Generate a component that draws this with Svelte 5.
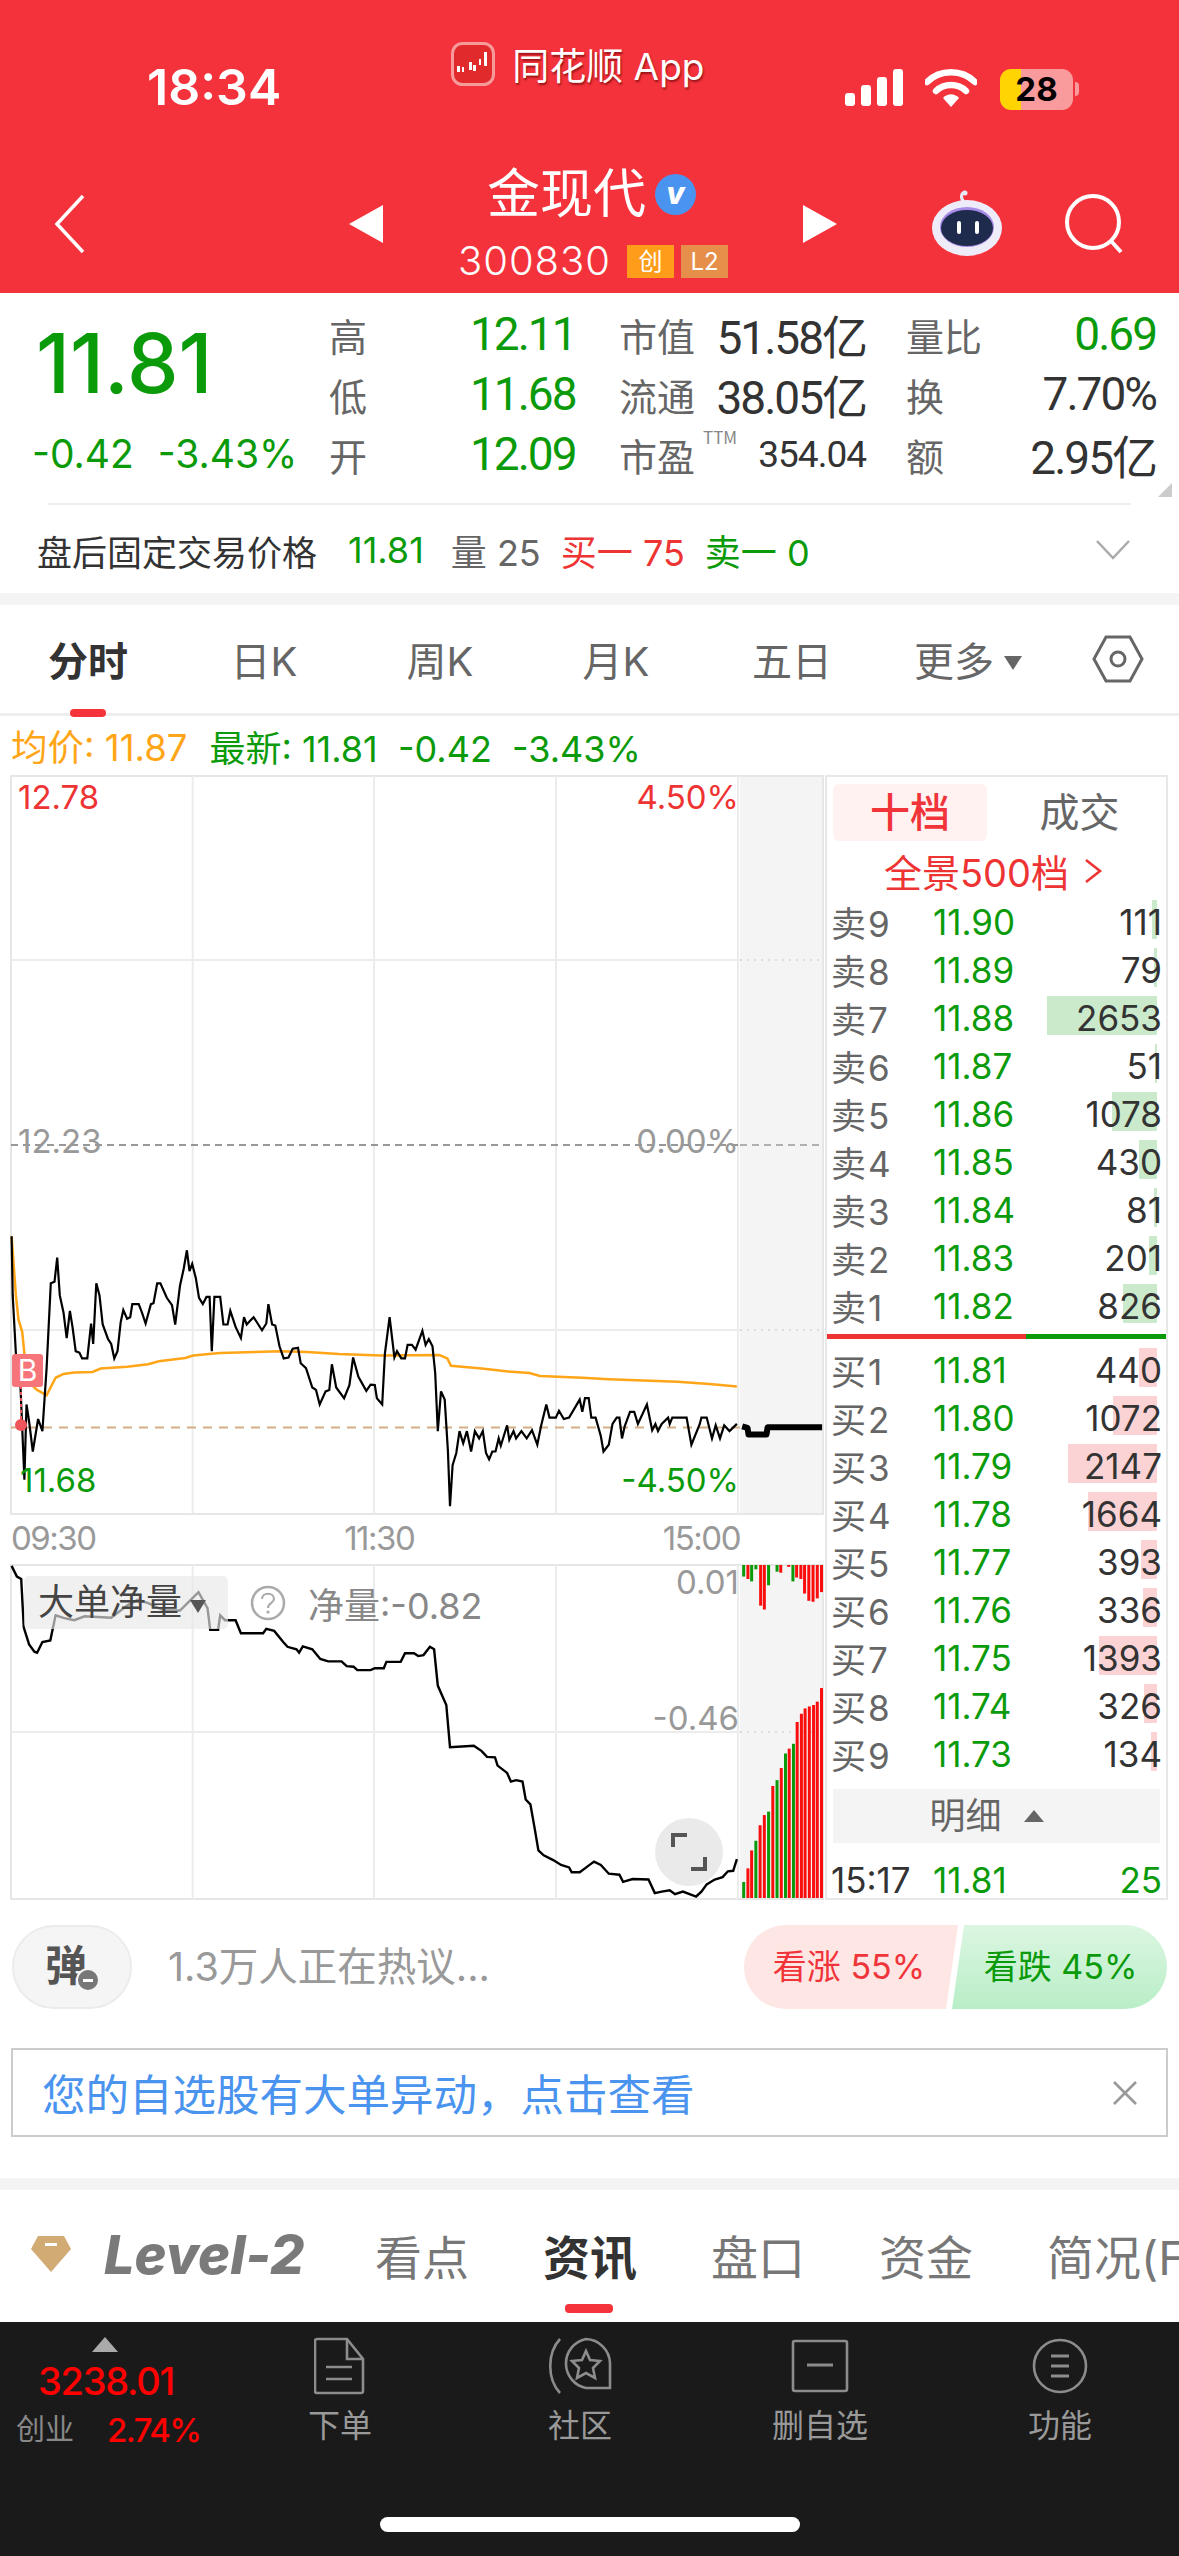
<script>
	// points are read off the chart at zoomed scale, sx/sy bring them back to page px
	const sx = 1.889, sy = 2.063;
	const top = 375;
	function line(flat) {
		let out = [];
		for (let i = 0; i < flat.length; i += 2) {
			out.push((flat[i] / sx).toFixed(1) + ',' + (top + flat[i + 1] / sy).toFixed(1));
		}
		return out.join(' ');
	}

	const price = line([22,178,24,300,30,420,38,470,46,680,50,525,55,560,62,622,72,555,80,580,88,450,96,275,103,272,108,222,113,300,120,335,126,388,132,332,137,365,143,415,150,418,155,430,165,430,172,358,176,400,182,275,188,300,194,360,204,390,210,400,216,430,222,415,228,355,233,330,240,348,246,345,250,318,262,318,268,335,275,358,285,318,290,316,297,275,303,275,315,305,325,320,331,360,340,280,347,245,353,207,358,250,363,235,370,265,376,305,383,318,390,303,396,303,400,415,405,303,416,303,422,360,430,360,435,332,445,365,455,388,461,345,466,360,473,352,479,345,488,360,495,372,503,358,507,318,514,360,520,362,528,405,536,430,545,428,553,410,563,408,568,440,578,450,590,490,597,495,604,525,615,498,622,495,627,442,635,490,650,512,660,485,667,428,677,468,692,497,700,484,708,485,712,512,722,525,727,420,736,345,745,428,750,415,758,430,765,430,770,402,778,402,785,412,798,373,804,402,810,390,817,405,822,460,827,580,833,498,840,515,846,620,850,735,855,650,862,625,868,580,875,605,882,580,890,622,897,580,905,595,912,580,918,625,924,638,930,622,936,622,942,595,946,610,958,568,962,598,970,580,975,595,985,580,995,595,1005,578,1015,608,1022,570,1032,525,1038,552,1050,552,1056,538,1065,555,1075,552,1095,515,1100,540,1105,512,1112,512,1117,552,1125,552,1135,590,1140,622,1150,608,1157,565,1165,552,1170,552,1175,595,1180,570,1190,540,1198,540,1205,565,1222,525,1232,578,1238,565,1243,580,1250,565,1262,552,1265,565,1270,552,1297,552,1306,608,1322,565,1325,552,1335,552,1345,595,1352,568,1360,595,1368,568,1378,580,1392,565]);
	const after = line([1402,570,1412,573,1414,587,1448,587,1450,572,1553,572]);
	const avg = line([22,178,30,300,35,350,42,375,48,440,55,480,70,495,88,506,105,470,120,462,140,459,175,458,190,451,240,447,280,442,300,436,350,429,365,424,415,419,530,415,580,417,640,421,720,424,830,423,845,430,852,445,910,451,960,457,1000,460,1020,466,1100,470,1150,473,1280,478,1340,483,1392,488]);
	const net = line([22,858,32,880,40,885,45,985,55,1020,65,1035,70,1037,80,1015,95,1012,105,960,120,965,140,970,160,962,210,965,240,940,260,928,280,935,310,950,340,950,375,912,392,945,397,990,412,990,416,960,425,970,445,970,455,997,497,997,503,988,518,992,535,1015,543,1025,560,1030,565,1037,572,1024,590,1030,605,1050,620,1055,645,1055,655,1065,668,1066,675,1073,700,1073,708,1069,725,1069,730,1056,757,1056,765,1038,782,1038,790,1044,800,1042,812,1025,820,1030,827,1105,835,1125,843,1145,850,1232,895,1229,910,1240,920,1252,935,1253,940,1270,958,1285,965,1303,975,1300,987,1303,993,1340,1002,1350,1010,1400,1017,1445,1027,1455,1045,1465,1060,1475,1075,1480,1080,1490,1095,1490,1110,1478,1122,1468,1135,1475,1150,1493,1170,1495,1177,1510,1195,1504,1225,1505,1237,1533,1250,1530,1265,1527,1275,1535,1290,1530,1315,1540,1325,1530,1335,1515,1350,1505,1365,1500,1375,1488,1385,1487,1392,1463]);

	// after hours bars: [x, y end, colour]
	const barsTop = [[1402,880,'g'],[1410,885,'r'],[1417,890,'g'],[1425,865,'g'],[1434,940,'r'],[1441,948,'r'],[1449,898,'g'],[1465,870,'g'],[1472,872,'r'],[1487,860,'r'],[1495,890,'g'],[1502,882,'r'],[1510,885,'r'],[1517,915,'r'],[1525,930,'r'],[1533,932,'r'],[1541,925,'r'],[1549,912,'r']];
	const barsBottom = [[1402,1510,'g'],[1410,1482,'r'],[1417,1445,'r'],[1425,1425,'g'],[1433,1393,'r'],[1441,1372,'r'],[1449,1365,'g'],[1457,1312,'r'],[1465,1300,'g'],[1473,1275,'r'],[1481,1245,'g'],[1488,1235,'r'],[1496,1225,'g'],[1503,1180,'r'],[1511,1163,'r'],[1518,1152,'r'],[1526,1148,'r'],[1534,1145,'r'],[1541,1138,'r'],[1549,1110,'r']];
	const colorOf = (c) => (c == 'g' ? '#0a9a0a' : '#fa0d0d');

	const quote = [
		['高', '12.11', '市值', '51.58亿', '量比', '0.69', true],
		['低', '11.68', '流通', '38.05亿', '换', '7.70%', false],
		['开', '12.09', '市盈', '354.04', '额', '2.95亿', false],
	];
	const sells = [[9,'11.90',111],[8,'11.89',79],[7,'11.88',2653],[6,'11.87',51],[5,'11.86',1078],[4,'11.85',430],[3,'11.84',81],[2,'11.83',201],[1,'11.82',826]];
	const buys = [[1,'11.81',440],[2,'11.80',1072],[3,'11.79',2147],[4,'11.78',1664],[5,'11.77',393],[6,'11.76',336],[7,'11.75',1393],[8,'11.74',326],[9,'11.73',134]];
	const tabs = ['日K', '周K', '月K', '五日'];
	const gridX = [192.7, 374, 556, 738];
</script>

<div class="page">
	<header>
		<div class="status">
			<span class="time">18:34</span>
			<div class="app">
				<svg width="44" height="44" viewBox="0 0 44 44">
					<rect x="1.5" y="1.5" width="41" height="41" rx="10" fill="#e12a2c" stroke="#f79a9a" stroke-width="3"/>
					<path d="M6 24h3v6H6zM11 25h2v5h-2zM18 20h3v8h-3zM22 23h3v6h-3zM28 17h2v6h-2zM33 10h3v14h-3z" fill="#fff"/>
				</svg>
				<span>同花顺 App</span>
			</div>
			<div class="sys">
				<svg width="58" height="37" viewBox="0 0 58 37">
					<rect x="0" y="24" width="10" height="13" rx="3" fill="#fff"/>
					<rect x="16" y="16" width="10" height="21" rx="3" fill="#fff"/>
					<rect x="32" y="8" width="10" height="29" rx="3" fill="#fff"/>
					<rect x="48" y="0" width="10" height="37" rx="3" fill="#fff"/>
				</svg>
				<svg width="52" height="38" viewBox="0 0 52 38">
					<path d="M2 13C15 0 37 0 50 13" fill="none" stroke="#fff" stroke-width="6.5" stroke-linecap="round"/>
					<path d="M11 22C19 14 33 14 41 22" fill="none" stroke="#fff" stroke-width="6.5" stroke-linecap="round"/>
					<path d="M18 29C23 24 29 24 34 29L26 38z" fill="#fff"/>
				</svg>
				<div class="batt"><span>28</span></div>
				<i class="nub"></i>
			</div>
		</div>
		<div class="nav">
			<svg class="back" width="32" height="60" viewBox="0 0 32 60"><path d="M29 2L3 30l26 28" fill="none" stroke="#fff" stroke-width="3.5"/></svg>
			<i class="tri-l"></i>
			<div class="stock">
				<div class="name">金现代<span class="vmark">v</span></div>
				<div class="code">300830<b class="tag chuang">创</b><b class="tag l2">L2</b></div>
			</div>
			<i class="tri-r"></i>
			<svg class="robot" width="72" height="68" viewBox="0 0 72 68">
				<path d="M33 12C29 8 30 3 34 2" fill="none" stroke="#e8e8f5" stroke-width="3"/>
				<circle cx="34" cy="3" r="2.5" fill="#e8e8f5"/>
				<ellipse cx="36" cy="38" rx="35" ry="28" fill="#eeecf9"/>
				<ellipse cx="36" cy="37" rx="27" ry="20" fill="#a88be8"/>
				<ellipse cx="36" cy="38" rx="26" ry="18" fill="#1f2b4d"/>
				<rect x="26" y="31" width="4" height="13" rx="2" fill="#fff"/>
				<rect x="44" y="31" width="4" height="13" rx="2" fill="#fff"/>
			</svg>
			<svg class="search" width="62" height="62" viewBox="0 0 62 62">
				<circle cx="29" cy="29" r="26" fill="none" stroke="#fff" stroke-width="4"/>
				<path d="M47 48l10 11" stroke="#fff" stroke-width="4"/>
			</svg>
		</div>
	</header>

	<section class="quote">
		<div class="summary">
			<div class="last">
				<div class="big">11.81</div>
				<div class="chg"><span>-0.42</span><span>-3.43%</span></div>
			</div>
			<div class="cells">
				{#each quote as q, i}
					<span class="lb">{q[0]}</span>
					<span class="up first">{q[1]}</span>
					<span class="lb">{q[2]}{#if i == 2}<sup>TTM</sup>{/if}</span>
					<span class="val" class:small={i == 2}>{q[3]}</span>
					<span class="lb far">{q[4]}</span>
					<span class="val end" class:up={q[6]}>{q[5]}</span>
				{/each}
			</div>
			<i class="corner"></i>
		</div>
		<div class="rule"></div>
		<div class="fixed">
			<span class="fx-title">盘后固定交易价格</span>
			<span class="gr fx-num">11.81</span>
			<span class="fx-vol">量 25</span>
			<span class="rd">买一 75</span>
			<span class="gr">卖一 0</span>
			<svg width="34" height="20" viewBox="0 0 34 20"><path d="M1 1l16 17L33 1" fill="none" stroke="#aaa" stroke-width="2.5"/></svg>
		</div>
	</section>
	<div class="band"></div>

	<nav class="periods">
		<span class="period on">分时</span>
		{#each tabs as t}
			<span class="period">{t}</span>
		{/each}
		<span class="period">更多<i class="down"></i></span>
		<span class="period">
			<svg width="52" height="48" viewBox="0 0 52 48">
				<path d="M14 2h24l12 22-12 22H14L2 24z" fill="none" stroke="#666" stroke-width="3"/>
				<circle cx="26" cy="24" r="7" fill="none" stroke="#666" stroke-width="3"/>
			</svg>
		</span>
	</nav>
	<div class="legend">
		<span class="avg">均价: 11.87</span>
		<span class="gr">最新: 11.81&nbsp; -0.42&nbsp; -3.43%</span>
	</div>

	<div class="main">
		<div class="chart">
			<svg width="824" height="1125" viewBox="0 0 824 1125">
				<rect x="740" y="1" width="83" height="738" fill="#f4f4f4"/>
				<rect x="740" y="790" width="83" height="334" fill="#f4f4f4"/>
				<rect x="11" y="1" width="812" height="738" fill="none" stroke="#e6e6e6" stroke-width="2"/>
				<rect x="11" y="790" width="812" height="334" fill="none" stroke="#e6e6e6" stroke-width="2"/>
				{#each gridX as x}
					<line x1={x} x2={x} y1="1" y2="739" stroke="#ececec" stroke-width="2"/>
					<line x1={x} x2={x} y1="790" y2="1124" stroke="#ececec" stroke-width="2"/>
				{/each}
				<line x1="11" x2="740" y1="185" y2="185" stroke="#ececec" stroke-width="2"/>
				<line x1="11" x2="740" y1="555" y2="555" stroke="#ececec" stroke-width="2"/>
				<line x1="11" x2="740" y1="957" y2="957" stroke="#ececec" stroke-width="2"/>
				<line x1="11" x2="740" y1="370" y2="370" stroke="#777" stroke-width="1.5" stroke-dasharray="7 5"/>
				<line x1="740" x2="823" y1="185" y2="185" stroke="#ddd" stroke-width="2" stroke-dasharray="2 5"/>
				<line x1="740" x2="823" y1="370" y2="370" stroke="#999" stroke-width="1.5" stroke-dasharray="7 5"/>
				<line x1="740" x2="823" y1="555" y2="555" stroke="#ddd" stroke-width="2" stroke-dasharray="2 5"/>
				<line x1="740" x2="823" y1="957" y2="957" stroke="#ddd" stroke-width="2" stroke-dasharray="2 5"/>
				<line x1="11" x2="740" y1="652.5" y2="652.5" stroke="#d4ae86" stroke-width="2" stroke-dasharray="9 7"/>

				<polyline points={avg} fill="none" stroke="#ffa518" stroke-width="2.5"/>
				<polyline points={price} fill="none" stroke="#000" stroke-width="2.2"/>
				<polyline points={after} fill="none" stroke="#000" stroke-width="6" stroke-linejoin="round"/>
				<line x1="21" x2="21" y1="611" y2="650" stroke="#f0555b" stroke-width="2" stroke-dasharray="3 3"/>
				<circle cx="21" cy="650" r="6" fill="#f0555b"/>
				<polyline points={net} fill="none" stroke="#000" stroke-width="2.4"/>

				{#each barsTop as b}
					<rect x={b[0] / sx} y="790" width="3" height={top + b[1] / sy - 790} fill={colorOf(b[2])}/>
				{/each}
				{#each barsBottom as b}
					<rect x={b[0] / sx} y={top + b[1] / sy} width="3" height={1123 - top - b[1] / sy} fill={colorOf(b[2])}/>
				{/each}
			</svg>

			<span class="mark rd" style="left:18px;top:0px">12.78</span>
			<span class="mark rd right" style="top:0px">4.50%</span>
			<span class="mark muted" style="left:18px;top:344px">12.23</span>
			<span class="mark muted right" style="top:344px">0.00%</span>
			<span class="mark gr" style="left:20px;top:683px">11.68</span>
			<span class="mark gr right" style="top:683px">-4.50%</span>
			<span class="b-tag">B</span>
			<div class="axis">
				<span>09:30</span><span>11:30</span><span>15:00</span>
			</div>
			<span class="mark muted right" style="top:785px">0.01</span>
			<span class="mark muted right" style="top:921px">-0.46</span>
			<div class="net-head">
				<div class="net-sel">大单净量<i class="down dark"></i></div>
				<svg width="36" height="36" viewBox="0 0 36 36">
					<circle cx="18" cy="18" r="16" fill="none" stroke="#aaa" stroke-width="2.5"/>
					<path d="M12 14c0-7 12-7 12 0 0 4-6 4-6 9" fill="none" stroke="#aaa" stroke-width="2.2"/>
					<circle cx="18" cy="27" r="1.6" fill="#aaa"/>
				</svg>
				<span>净量:-0.82</span>
			</div>
			<div class="expand">
				<svg width="36" height="38" viewBox="0 0 36 38">
					<path d="M2 14V2h14M34 24v12H20" fill="none" stroke="#555" stroke-width="4"/>
				</svg>
			</div>
		</div>

		<aside class="book">
			<div class="book-tabs">
				<span class="book-on">十档</span>
				<span class="book-off">成交</span>
			</div>
			<div class="level500">全景500档
				<svg width="20" height="26" viewBox="0 0 20 26"><path d="M3 2l14 11L3 24" fill="none" stroke="#ee3333" stroke-width="2.6"/></svg>
			</div>
			{#each sells as r}
				<div class="row">
					<span class="r-lb">卖<em>{r[0]}</em></span>
					<span class="gr">{r[1]}</span>
					<span class="r-qty"><i class="fill sell" style="width:{r[2] * 0.0413}px"></i><b>{r[2]}</b></span>
				</div>
			{/each}
			<div class="split"><i></i><i></i></div>
			{#each buys as r}
				<div class="row">
					<span class="r-lb">买<em>{r[0]}</em></span>
					<span class="gr">{r[1]}</span>
					<span class="r-qty"><i class="fill buy" style="width:{r[2] * 0.0413}px"></i><b>{r[2]}</b></span>
				</div>
			{/each}
			<div class="detail">明细<i class="up-tri"></i></div>
			<div class="row tick">
				<span class="tick-t">15:17</span>
				<span class="gr">11.81</span>
				<span class="r-qty gr">25</span>
			</div>
		</aside>
	</div>

	<div class="danmu">
		<div class="dan-btn">弹<i class="minus"></i></div>
		<span class="hot">1.3万人正在热议...</span>
		<div class="vote">
			<span class="bull">看涨 55%</span>
			<span class="bear">看跌 45%</span>
		</div>
	</div>

	<div class="notice">
		<span>您的自选股有大单异动，点击查看</span>
		<svg width="26" height="26" viewBox="0 0 26 26"><path d="M2 2l22 22M24 2L2 24" stroke="#999" stroke-width="2.6"/></svg>
	</div>
	<div class="band low"></div>

	<nav class="news">
		<svg class="gem" width="42" height="38" viewBox="0 0 42 38">
			<path d="M8 1h26l7 13-20 23L1 14z" fill="#d2aa74"/>
			<rect x="15" y="8" width="12" height="3" fill="#fff"/>
		</svg>
		<span class="lv2">Level-2</span>
		<span class="nw n1">看点</span>
		<span class="nw on">资讯</span>
		<span class="nw">盘口</span>
		<span class="nw">资金</span>
		<span class="nw">简况(F10)</span>
	</nav>

	<footer>
		<div class="dock">
			<div class="index">
				<i class="idx-up"></i>
				<div class="idx-num">3238.01</div>
				<div class="idx-row"><span>创业</span><b>2.74%</b></div>
			</div>
			<div class="dock-item">
				<svg width="52" height="58" viewBox="0 0 52 58">
					<path d="M3 2h30l16 20v32a2 2 0 0 1-2 2H3a2 2 0 0 1-2-2V4a2 2 0 0 1 2-2z" fill="none" stroke="#8c8c8c" stroke-width="2.6"/>
					<path d="M33 2v20h16M12 30h26M12 42h26" fill="none" stroke="#8c8c8c" stroke-width="2.6"/>
				</svg>
				<span>下单</span>
			</div>
			<div class="dock-item">
				<svg width="64" height="58" viewBox="0 0 64 58">
					<path d="M12 2C-1 16-1 42 12 56" fill="none" stroke="#8c8c8c" stroke-width="2.6"/>
					<path d="M38 2a25 25 0 0 1 24 24v25H38a25 25 0 0 1 0-49z" fill="none" stroke="#8c8c8c" stroke-width="2.6"/>
					<path d="M38 14l4 9 10 1-7 7 2 10-9-5-9 5 2-10-7-7 10-1z" fill="none" stroke="#8c8c8c" stroke-width="2.6"/>
				</svg>
				<span>社区</span>
			</div>
			<div class="dock-item">
				<svg width="58" height="54" viewBox="0 0 58 54">
					<rect x="2" y="2" width="54" height="50" rx="2" fill="none" stroke="#8c8c8c" stroke-width="2.6"/>
					<path d="M16 26h26" stroke="#8c8c8c" stroke-width="3"/>
				</svg>
				<span>删自选</span>
			</div>
			<div class="dock-item">
				<svg width="56" height="56" viewBox="0 0 56 56">
					<circle cx="28" cy="28" r="26" fill="none" stroke="#8c8c8c" stroke-width="2.6"/>
					<path d="M19 18h18M19 28h18M19 38h18" stroke="#8c8c8c" stroke-width="3"/>
				</svg>
				<span>功能</span>
			</div>
		</div>
		<div class="home"></div>
	</footer>
</div>

<style>
	:global(body) {
		margin: 0;
		background: #fff;
	}
	.page {
		width: 1179px;
		height: 2556px;
		overflow: hidden;
		display: flex;
		flex-direction: column;
		font-family: Inter, "Noto Sans CJK SC", sans-serif;
		color: #333;
	}
	i, em {
		font-style: normal;
	}
	.gr { color: #0a9a0a; }
	.rd { color: #ee3333; }
	.up { color: #0a9a0a; }

	header {
		height: 293px;
		background: #f4323b;
		color: #fff;
		flex: none;
	}
	.status {
		height: 150px;
		display: flex;
		padding-left: 147px;
	}
	.time {
		font-size: 50px;
		font-weight: 600;
		line-height: 58px;
		margin-top: 58px;
	}
	.app {
		margin: 42px 0 0 170px;
		height: 44px;
		display: flex;
		align-items: center;
		gap: 17px;
		font-size: 37px;
		text-shadow: 1px 2px 2px rgba(90, 0, 0, 0.6);
	}
	.sys {
		margin: 69px 0 0 auto;
		padding-right: 106px;
		display: flex;
		gap: 22px;
		height: 40px;
		position: relative;
	}
	.batt {
		width: 73px;
		height: 41px;
		margin-left: 1px;
		border-radius: 11px;
		background: linear-gradient(90deg, #ffd400 21px, #f99a9c 21px);
		color: #000;
		font-size: 33px;
		font-weight: 700;
		line-height: 41px;
		text-align: center;
	}
	.nub {
		position: absolute;
		right: 100px;
		top: 13px;
		width: 4px;
		height: 14px;
		border-radius: 0 4px 4px 0;
		background: #f99a9c;
	}
	.nav {
		height: 143px;
		display: flex;
		align-items: center;
		padding-top: 4px;
		box-sizing: border-box;
	}
	.back { margin-left: 54px; }
	.tri-l, .tri-r {
		width: 0;
		height: 0;
		border-top: 19px solid transparent;
		border-bottom: 19px solid transparent;
	}
	.tri-l {
		margin-left: 263px;
		border-right: 34px solid #fff;
	}
	.tri-r {
		border-left: 34px solid #fff;
	}
	.stock {
		width: 420px;
		align-self: flex-start;
		display: flex;
		flex-direction: column;
		align-items: center;
		margin-top: 9px;
	}
	.name {
		font-size: 53px;
		line-height: 62px;
		display: flex;
		align-items: center;
		gap: 9px;
		margin-left: -3px;
	}
	.vmark {
		width: 41px;
		height: 41px;
		border-radius: 50%;
		background: #4a94ef;
		font-size: 30px;
		font-weight: 800;
		font-style: italic;
		line-height: 38px;
		text-align: center;
	}
	.code {
		font-size: 40px;
		font-weight: 300;
		letter-spacing: 1px;
		line-height: 36px;
		display: flex;
		align-items: center;
		margin-top: 18px;
	}
	.tag {
		width: 47px;
		height: 33px;
		font-size: 24px;
		font-weight: 400;
		letter-spacing: 0;
		line-height: 33px;
		text-align: center;
	}
	.chuang {
		background: #ff9d1a;
		margin-left: 16px;
	}
	.l2 {
		background: #e68f4a;
		margin-left: 7px;
	}
	.robot { margin-left: 94px; }
	.search { margin-left: 61px; }

	.quote {
		height: 300px;
		flex: none;
	}
	.summary {
		height: 210px;
		padding-top: 11px;
		box-sizing: border-box;
		display: flex;
		position: relative;
	}
	.last {
		width: 329px;
		padding-left: 32px;
		box-sizing: border-box;
		flex: none;
	}
	.big {
		font-size: 82px;
		font-weight: 500;
		line-height: 84px;
		color: #0a9a0a;
		margin-top: 18px;
		margin-left: 4px;
	}
	.chg {
		display: flex;
		gap: 24px;
		font-size: 39px;
		line-height: 40px;
		color: #0a9a0a;
		margin-top: 28px;
	}
	.cells {
		display: grid;
		grid-template-columns: 144px 146px 96px 151px 120px 170px;
		grid-auto-rows: 60px;
		align-items: center;
		font-family: Roboto, "Noto Sans CJK SC", sans-serif;
		font-size: 46px;
		letter-spacing: -2px;
		flex: none;
		height: 180px;
	}
	.first { margin-left: -3px; }
	.lb {
		font-family: "Noto Sans CJK SC", sans-serif;
		font-size: 38px;
		letter-spacing: 0;
		color: #666;
		position: relative;
		white-space: nowrap;
	}
	.far { padding-left: 40px; }
	.lb sup {
		position: absolute;
		left: 84px;
		top: -3px;
		font-size: 17px;
		color: #888;
	}
	.val {
		color: #333;
		text-align: right;
		white-space: nowrap;
	}
	.small {
		font-size: 37px;
		letter-spacing: -1px;
	}
	.end {
		text-align: right;
	}
	.cells .val.end { color: #333; }
	.cells .val.end.up { color: #0a9a0a; }
	.corner {
		position: absolute;
		right: 7px;
		bottom: 6px;
		border-left: 14px solid transparent;
		border-bottom: 14px solid #ccc;
	}
	.rule {
		height: 2px;
		margin: 0 48px;
		background: #eee;
	}
	.fixed {
		height: 88px;
		padding: 2px 49px 0 37px;
		box-sizing: border-box;
		display: flex;
		align-items: center;
		font-size: 36px;
		gap: 20px;
	}
	.fixed svg { margin-left: auto; }
	.fx-title {
		font-size: 35px;
		color: #333;
		margin-right: 11px;
	}
	.fx-num { margin-right: 7px; }
	.fx-vol { color: #666; }
	.band {
		height: 12px;
		background: #f4f4f4;
		flex: none;
	}
	.periods {
		display: grid;
		grid-template-columns: repeat(6, 176px) 1fr;
		height: 111px;
		box-sizing: border-box;
		border-bottom: 3px solid #eee;
		flex: none;
		align-items: center;
	}
	.period {
		font-size: 40px;
		color: #666;
		text-align: center;
		position: relative;
	}
	.period svg { display: block; margin: 0 auto; }
	.on.period {
		font-weight: 700;
		color: #333;
	}
	.on.period::after {
		content: '';
		position: absolute;
		left: 70px;
		bottom: -29px;
		width: 36px;
		height: 8px;
		border-radius: 4px;
		background: #f5333a;
	}
	.down {
		display: inline-block;
		margin-left: 10px;
		vertical-align: 6px;
		border-left: 9px solid transparent;
		border-right: 9px solid transparent;
		border-top: 14px solid #666;
	}
	.legend {
		height: 59px;
		padding-left: 11px;
		display: flex;
		align-items: center;
		gap: 22px;
		font-size: 36px;
		flex: none;
	}
	.avg {
		color: #ffa518;
		font-size: 36.5px;
	}

	.main {
		height: 1125px;
		display: flex;
		flex: none;
	}
	.chart {
		width: 825px;
		position: relative;
		flex: none;
	}
	.chart svg { display: block; }
	.mark {
		position: absolute;
		font-size: 33px;
		line-height: 44px;
	}
	.mark.right { right: 86px; }
	.muted { color: #999; }
	.b-tag {
		position: absolute;
		left: 12px;
		top: 579px;
		width: 31px;
		height: 33px;
		background: #f5757b;
		border-radius: 3px;
		color: #fff;
		font-size: 30px;
		line-height: 33px;
		text-align: center;
	}
	.axis {
		position: absolute;
		left: 11px;
		top: 743px;
		width: 729px;
		display: flex;
		justify-content: space-between;
		font-size: 33px;
		letter-spacing: -1.5px;
		line-height: 40px;
		color: #999;
	}
	.net-head {
		position: absolute;
		left: 24px;
		top: 801px;
		display: flex;
		align-items: center;
		font-size: 36px;
		color: #888;
		gap: 22px;
	}
	.net-sel {
		width: 204px;
		height: 53px;
		padding-left: 14px;
		box-sizing: border-box;
		border-radius: 5px;
		background: rgba(232, 232, 232, 0.65);
		color: #444;
		line-height: 53px;
		white-space: nowrap;
	}
	.down.dark {
		margin-left: 8px;
		vertical-align: 2px;
		border-left-width: 8px;
		border-right-width: 8px;
		border-top: 13px solid #555;
	}
	.expand {
		position: absolute;
		left: 655px;
		top: 1043px;
		width: 68px;
		height: 68px;
		border-radius: 50%;
		background: rgba(232, 232, 232, 0.9);
		display: flex;
		align-items: center;
		justify-content: center;
	}

	.book {
		width: 343px;
		box-sizing: border-box;
		border: 2px solid #e8e8e8;
		padding: 0 4px;
		flex: none;
		font-size: 35px;
		position: relative;
	}
	.book-tabs {
		display: flex;
		height: 57px;
		margin: 7px 0 0 2px;
		font-size: 40px;
		line-height: 57px;
		text-align: center;
	}
	.book-on {
		width: 154px;
		background: #fff2f0;
		border-radius: 6px;
		color: #f0343a;
		font-weight: 500;
	}
	.book-off {
		flex: 1;
		color: #666;
		padding-left: 10px;
	}
	.level500 {
		height: 55px;
		padding: 4px 6px 0 0;
		box-sizing: border-box;
		color: #ee3333;
		font-size: 38px;
		display: flex;
		align-items: center;
		justify-content: center;
		gap: 14px;
	}
	.row {
		height: 48px;
		display: grid;
		grid-template-columns: 102px 1fr auto;
		align-items: center;
	}
	.r-lb { color: #666; }
	.r-lb em { margin-left: 2px; }
	.r-qty {
		position: relative;
		color: #333;
		text-align: right;
	}
	.r-qty b {
		font-weight: 400;
		position: relative;
	}
	.fill {
		position: absolute;
		right: 5px;
		top: -1px;
		height: 39px;
	}
	.sell { background: #cbe9cb; }
	.buy { background: #fbd3d5; }
	.split {
		display: flex;
		height: 5px;
		margin: 6px -4px 5px -4px;
	}
	.split i:first-child {
		width: 199px;
		background: #ee3333;
	}
	.split i:last-child {
		flex: 1;
		background: #0a9a0a;
	}
	.detail {
		height: 54px;
		margin: 13px 2px 0;
		background: #f4f4f4;
		color: #666;
		font-size: 36px;
		line-height: 54px;
		display: flex;
		justify-content: center;
		align-items: center;
		gap: 22px;
		padding-right: 20px;
	}
	.up-tri {
		border-left: 10px solid transparent;
		border-right: 10px solid transparent;
		border-bottom: 12px solid #666;
	}
	.tick { margin-top: 13px; }
	.tick-t { color: #333; }
	.tick .r-qty { color: #0a9a0a; }

	.danmu {
		height: 148px;
		padding: 25px 12px 0;
		box-sizing: border-box;
		display: flex;
		align-items: flex-start;
		flex: none;
	}
	.dan-btn {
		width: 120px;
		height: 84px;
		box-sizing: border-box;
		border: 2px solid #ececec;
		border-radius: 42px;
		background: #f5f5f5;
		color: #555;
		font-size: 42px;
		font-weight: 700;
		line-height: 78px;
		text-align: center;
		position: relative;
		padding-right: 12px;
	}
	.minus {
		position: absolute;
		left: 62px;
		top: 41px;
		width: 20px;
		height: 20px;
		border-radius: 50%;
		background: #777;
		border: 2px solid #f5f5f5;
	}
	.minus::after {
		content: '';
		position: absolute;
		left: 5px;
		top: 9px;
		width: 10px;
		height: 3px;
		background: #fff;
	}
	.hot {
		margin-left: 36px;
		font-size: 39.5px;
		color: #999;
		line-height: 84px;
	}
	.vote {
		margin-left: auto;
		display: flex;
		font-size: 34px;
		line-height: 84px;
		height: 84px;
	}
	.bull, .bear {
		text-align: center;
		box-sizing: border-box;
		width: 214px;
	}
	.bull {
		color: #f0343a;
		background: #fde6e3;
		border-radius: 42px 0 0 42px;
		padding-right: 4px;
		clip-path: polygon(0 0, 100% 0, calc(100% - 12px) 100%, 0 100%);
	}
	.bear {
		width: 215px;
		margin-left: -6px;
		color: #0a9a0a;
		background: linear-gradient(180deg, #dcf6e2, #b8eec7);
		border-radius: 0 42px 42px 0;
		padding-left: 2px;
		clip-path: polygon(12px 0, 100% 0, 100% 100%, 0 100%);
	}
	.notice {
		height: 89px;
		margin: 0 11px;
		box-sizing: border-box;
		border: 2px solid #ccc;
		display: flex;
		align-items: center;
		justify-content: space-between;
		padding: 0 28px 0 29px;
		font-size: 43.5px;
		color: #4a94ef;
		flex: none;
	}
	.low { margin-top: 41px; }
	.news {
		height: 132px;
		display: flex;
		align-items: center;
		padding: 0 0 4px 30px;
		box-sizing: border-box;
		flex: none;
		white-space: nowrap;
		font-size: 47px;
		color: #777;
		overflow: hidden;
	}
	.gem { flex: none; }
	.lv2 {
		margin-left: 32px;
		font-size: 54px;
		font-weight: 800;
		font-style: italic;
		color: #7a7a7a;
		width: 271px;
		flex: none;
	}
	.nw {
		width: 168px;
		flex: none;
		position: relative;
	}
	.nw.on {
		color: #333;
		font-weight: 700;
	}
	.nw.on::after {
		content: '';
		position: absolute;
		left: 22px;
		bottom: -24px;
		width: 48px;
		height: 9px;
		border-radius: 4px;
		background: #f5333a;
	}

	footer {
		flex: 1;
		background: #1a1a1a;
		display: flex;
		flex-direction: column;
	}
	.dock {
		display: grid;
		grid-template-columns: 220px repeat(4, 240px);
	}
	.index {
		padding: 15px 0 0 16px;
		position: relative;
	}
	.idx-up {
		display: block;
		width: 0;
		margin-left: 76px;
		border-left: 13px solid transparent;
		border-right: 13px solid transparent;
		border-bottom: 15px solid #aaa;
	}
	.idx-num {
		margin: 6px 0 0 22px;
		font-size: 38px;
		font-weight: 500;
		letter-spacing: -1.3px;
		color: #f00;
		line-height: 46px;
	}
	.idx-row {
		display: flex;
		align-items: center;
		gap: 33px;
		margin-top: 3px;
		line-height: 46px;
		font-size: 29px;
		color: #888;
		white-space: nowrap;
	}
	.idx-row b {
		font-size: 33px;
		font-weight: 500;
		letter-spacing: -1.5px;
		color: #f00;
	}
	.dock-item {
		display: flex;
		flex-direction: column;
		align-items: center;
		padding-top: 15px;
		color: #999;
		font-size: 32px;
		line-height: 36px;
	}
	.dock-item svg { height: 58px; }
	.dock-item span { margin-top: 13px; }
	.home {
		width: 420px;
		height: 15px;
		border-radius: 8px;
		background: #fff;
		margin: auto auto 24px;
	}
</style>
